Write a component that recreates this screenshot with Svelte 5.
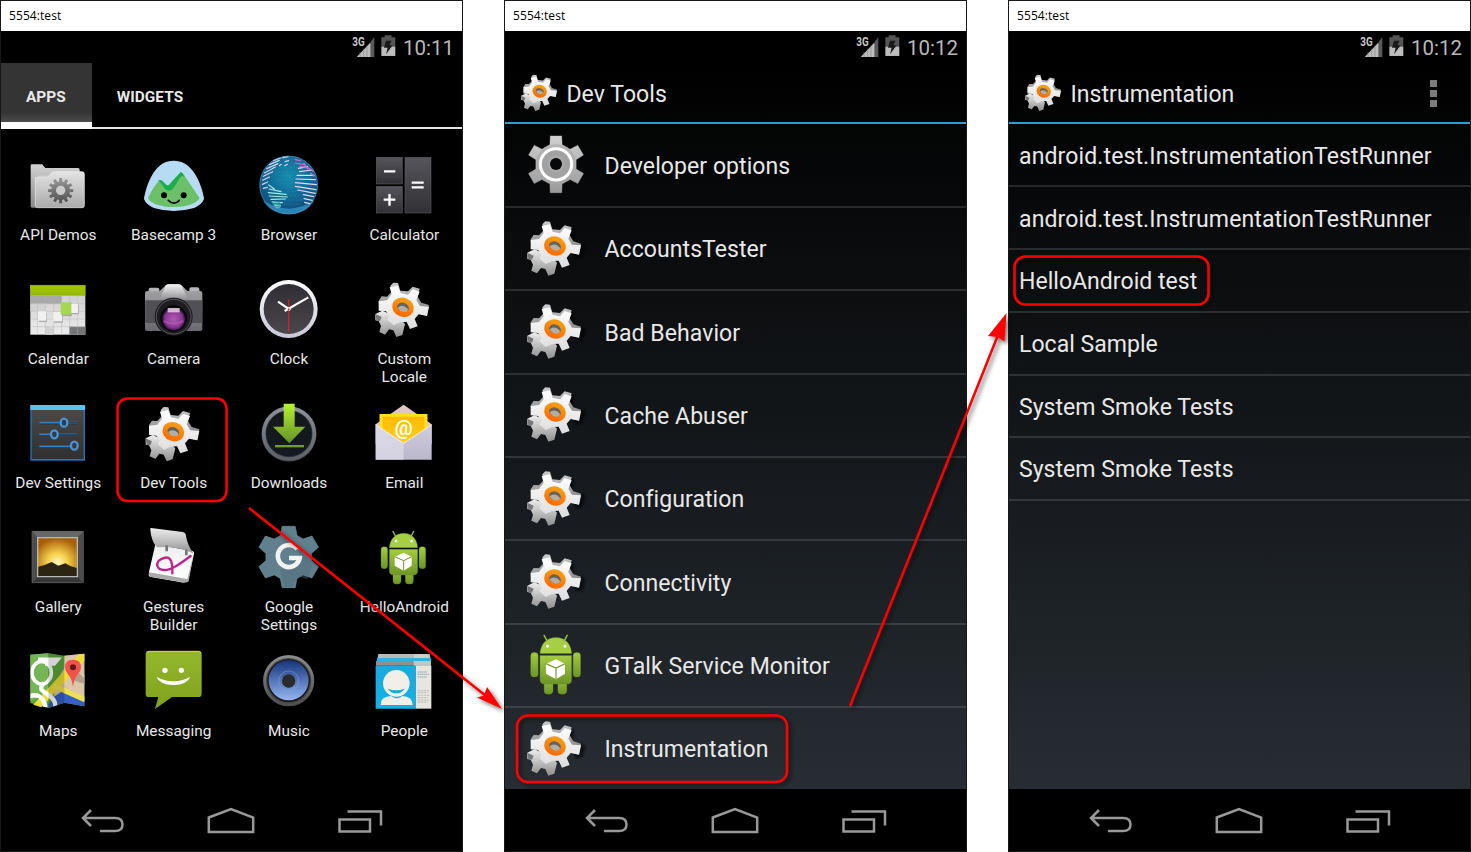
<script>
  const apps = [
    ['API Demos', 'folder', '80 24'],
    ['Basecamp 3', 'basecamp', '426 24'],
    ['Browser', 'browser', '75 24'],
    ['Calculator', 'calculator', '421 24'],
    ['Calendar', 'calendar', '80 21'],
    ['Camera', 'camera', '426 21'],
    ['Clock', 'clock', '75 21'],
    ['Custom Locale', 'gears', '421 21'],
    ['Dev Settings', 'sliders', '80 33'],
    ['Dev Tools', 'gears', '420 20'],
    ['Downloads', 'downloads', '75 33'],
    ['Email', 'email', '421 33'],
    ['Gallery', 'gallery', '80 30'],
    ['Gestures Builder', 'gestures', '426 30'],
    ['Google Settings', 'google', '75 30'],
    ['HelloAndroid', 'android', '421 30'],
    ['Maps', 'maps', '80 402'],
    ['Messaging', 'messaging', '426 402'],
    ['Music', 'music', '75 402'],
    ['People', 'people', '421 402'],
  ];

  const tools = [
    ['Developer options', 'options'],
    ['AccountsTester', 'gears'],
    ['Bad Behavior', 'gears'],
    ['Cache Abuser', 'gears'],
    ['Configuration', 'gears'],
    ['Connectivity', 'gears'],
    ['GTalk Service Monitor', 'android'],
    ['Instrumentation', 'gears'],
  ];
  const toolViews = { options: '60 308 192 192', gears: '421 22 192 192', android: '432 40 168 172' };

  const tests = [
    'android.test.InstrumentationTestRunner',
    'android.test.InstrumentationTestRunner',
    'HelloAndroid test',
    'Local Sample',
    'System Smoke Tests',
    'System Smoke Tests',
  ];

  // Toothed wheel outline; tip and base are half-angles in radians.
  function wheel(cx, cy, outer, inner, teeth, tip, base) {
    const pts = [];
    for (let i = 0; i < teeth; i++) {
      const a = (i * 2 * Math.PI) / teeth - Math.PI / 2;
      for (const [r, d] of [[inner, -base], [outer, -tip], [outer, tip], [inner, base]]) {
        pts.push(`${(cx + r * Math.cos(a + d)).toFixed(1)} ${(cy + r * Math.sin(a + d)).toFixed(1)}`);
      }
    }
    return `M${pts.join('L')}Z`;
  }
</script>

{#snippet icon(name, box)}
  <svg class="icon" viewBox={box} aria-hidden="true">
    {#if name === 'folder'}
      <path d="M94 62q0-4 4-4h28q4 0 6 4l6 7h98q5 0 5 5v20H110v94h-12q-4 0-4-4z" fill="url(#folderBack)" />
      <path d="M108 101q0-7 7-7h28q5 0 8-4l5-6q3-4 8-4h84q7 0 7 7v95q0 6-6 6H114q-6 0-6-6z" fill="url(#folderFront)" stroke="#eee" stroke-width="2" />
      <path d={wheel(184, 137, 38, 28, 12, 0.11, 0.17)} fill="url(#darkGear)" />
      <circle cx="184" cy="136" r="14" fill="#cbcbcb" />
    {:else if name === 'basecamp'}
      <path d="M521 47c-48 0-76 48-89 112 0 10 12 22 30 30q59 18 120 0c18-8 30-20 30-30-13-64-43-112-91-112z" fill="#b7dbf3" />
      <path d="M444 158c9-18 23-43 34-51 8-5 10 9 20 20 8 8 14 0 20-8l25-33c5-5 10 5 15 13l40 59c-3 13-29 28-77 28-46 0-73-14-77-28z" fill="#6cc069" />
      <path d="M473 108c12-8 16 2 24 10 7 7 13-1 18-8l25-27c6-4 9 4 13 12-8-5-12 2-17 9-7 9-16 35-31 33-16-2-18-27-32-29z" fill="#1bad49" />
      <circle cx="492" cy="151" r="9" /><circle cx="551" cy="151" r="9" />
      <path d="M505 166q17 17 33 0" fill="none" stroke="#000" stroke-width="5" stroke-linecap="round" />
    {:else if name === 'browser'}
      <circle cx="170" cy="120" r="88" fill="url(#globe)" />
      <path d="M92 165q78 52 156 0q-25 43-78 43t-78-43z" fill="#3b9fd9" opacity=".65" />
      <g fill="none" stroke="#4fa9cc" stroke-width="1.6" stroke-dasharray="3 5" opacity=".6">
        <path d="M145 68h50M133 80h62M138 92h50M138 104h48M145 116h45M155 128h38M165 140h34M165 152h40M160 165h52M155 178h50M138 42h65" />
      </g>
      <g fill="none" stroke="#e6d7f4" stroke-width="3.6" stroke-linecap="round">
        <path d="M124 47l22-8M112 59l30-13M104 71l34-15M97 84l33-18M94 94l28-14M92 106l20-10M91 118l16-7M94 130l12-3M152 38l16-3M159 50l11-3M158 62l8-4M142 62l6-4" stroke="#d9d0ee" />
        <path d="M199 70l28-5M203 80l36-5M195 91l51 0M192 102l58 2M190 113l63 6M190 124l62 10M197 135l53 10M214 149l31 6M216 161l25 5M218 172l15 4" />
        <path d="M190 44l17 4M190 54l26 5M204 64l22 5M216 55l11 17M229 69l15 10M236 85l10 8" stroke="#d36ad4" />
        <path d="M110 120l18 13M111 132l36 8M109 143l53 5M112 153l54 3M117 163l43-1M123 173l28 0M129 182l17 1" stroke="#a8e8e5" />
        <path d="M120 170l22 2M126 179l19 1M132 188l10 0" stroke="#38cbb5" />
      </g>
      <circle cx="170" cy="120" r="86.5" fill="none" stroke="#42a7d8" stroke-width="2" opacity=".7" />
    {:else if name === 'calculator'}
      <g fill="url(#key)" stroke="#656569" stroke-width="1.5">
        <rect x="434" y="37" width="78" height="80" /><rect x="434" y="124" width="78" height="80" /><rect x="520" y="37" width="78" height="167" />
      </g>
      <path d="M457 79h34M456 164h35M473.500 147v35M540 113h36M540 127h36" stroke="#fff" stroke-width="7" />
    {:else if name === 'calendar'}
      <rect x="93" y="45" width="165" height="149" fill="url(#calendarPage)" />
      <path d="M93 78h94v23H93z" fill="#a9a9aa" /><path d="M93 101h45v22H93zM138 170h25v24h-25z" fill="#d2d2d3" />
      <path d="M210 170h48v24h-48z" fill="#747678" />
      <path d="M114 78v116M138 78v116M163 78v116M187 78v116M211 78v116M235 78v116M93 101h165M93 124h165M93 147h165M93 170h165" stroke="#b2b2b4" stroke-width="1.2" />
      <rect x="93" y="45" width="165" height="32" fill="url(#lime)" />
      <path d="M93 46h165" stroke="#789500" stroke-width="2" />
      <g fill="#777"><path d="M118 128h25v28h-25zM164 130h26v28h-26zM216 105h22v28h-22zM187 100h31v39h-31z" opacity=".5" /></g>
      <path d="M116 124h25v28h-25zM162 126h26v28h-26zM214 101h22v28h-22z" fill="#f1f1f1" />
      <path d="M184 97h32v37h-32z" fill="#a5d850" />
    {:else if name === 'camera'}
      <path d="M446 58q0-5 6-5h20q6 0 6 5v8h-32zM568 57q0-5 6-5h18q6 0 6 5v8h-30z" fill="#b6b6b8" />
      <path d="M435 70q0-7 8-7h36l16-15q5-6 14-6h25q9 0 13 6l15 15h38q7 0 7 7v108q0 5-6 5H441q-6 0-6-5z" fill="url(#cameraBody)" />
      <path d="M436 91h171v68H436z" fill="#505055" />
      <path d="M497 46q3-3 12-3h25q8 0 12 5l18 42q-44-18-86 0z" fill="url(#prism)" />
      <circle cx="521" cy="140" r="57" fill="#1d1c20" /><circle cx="521" cy="140" r="52" fill="none" stroke="#5a575b" stroke-width="3" />
      <circle cx="521" cy="145" r="40" fill="#08070a" />
      <circle cx="521" cy="147" r="34" fill="url(#lens)" />
      <path d="M503 114h36v13h-36z" fill="#eadce9" opacity=".8" />
      <path d="M491 153q30 16 60 0" fill="none" stroke="#b768b8" stroke-width="6" opacity=".5" />
    {:else if name === 'clock'}
      <circle cx="170" cy="117" r="87" fill="url(#clockRim)" />
      <circle cx="170" cy="117" r="75" fill="url(#clockFace)" />
      <path d="M170 88v98" stroke="#c32626" stroke-width="4" />
      <path d="M138 95l37 25M158 123l71-41" stroke="#fff" stroke-width="6.500" />
      <circle cx="170" cy="118" r="3" fill="#d33" />
    {:else if name === 'gears'}
      <path d="M560 112l38-8 8 12-9 30-20 5zM545 62l25 0 0 28-18 6z" fill="#000" opacity=".55" filter="url(#soft)" />
      <path d="M431 132l21-10 48 20 20 20-8 33-18 6-9-20-13-3-12 16-17-8 5-18-7-15-10-2z" fill="url(#gearBack)" />
      <path d="M431 132l3 19 11 2 5-12z" fill="#777" />
      <path d="M480 65L476 47 485 38 499 39 506 62 529 64 543 50 564 56 558 80 569 98 592 105 586 138 560 131 480 125 443 115 441 92 450 79 466 80z" fill="url(#gearSide)" />
      <path d="M480 73L474 52 498 47 507 69 529 74 543 58 564 65 554 90 565 108 592 110 586 138 561 133 549 147 558 169 535 177 525 156 505 157 486 166 467 149 474 137 463 124 441 122 441 94 466 91z" fill="url(#gearFront)" />
      <ellipse cx="514" cy="112" rx="24" ry="20" transform="rotate(20 514 112)" fill="#65635f" />
      <path d="M498 113q10-9 22-3l9 7-2 9q-20 6-29-13z" fill="#c4c0b8" opacity=".8" />
      <ellipse cx="514" cy="112" rx="25.500" ry="21" transform="rotate(20 514 112)" fill="none" stroke="url(#orange)" stroke-width="15" />
    {:else if name === 'sliders'}
      <rect x="93" y="47" width="164" height="165" fill="#2b73b4" />
      <rect x="97" y="50" width="156" height="157" fill="url(#settingsFace)" />
      <path d="M93 45h164v15H93z" fill="#55c3f5" />
      <path d="M120 100h114M120 135h114M120 170h114" stroke="#252629" stroke-width="5" />
      <path d="M120 98h66M206 98h28M120 133h38M178 133h56M120 169h94" stroke="#3482c6" stroke-width="5" />
      <path d="M206 98h28M178 133h56" stroke="#20486f" stroke-width="4" />
      <g fill="#333a42" stroke="#4795d6" stroke-width="7"><ellipse cx="194" cy="98" rx="10" ry="12" /><ellipse cx="165" cy="133" rx="10" ry="12" /><ellipse cx="225" cy="167" rx="10" ry="12" /></g>
    {:else if name === 'downloads'}
      <circle cx="171" cy="132" r="83" fill="#303439" /><circle cx="171" cy="131" r="76" fill="none" stroke="url(#downloadRim)" stroke-width="11" />
      <circle cx="171" cy="131" r="68" fill="#14191d" />
      <path d="M155 41h33v69h32l-48 50-49-50h32z" fill="url(#downloadArrow)" />
      <path d="M129 165h87v7h-87z" fill="#6f9f2e" />
    {:else if name === 'email'}
      <path d="M432 103l84-59 84 59v60H432z" fill="#dfc7c0" />
      <path d="M444 72h143v95H444z" fill="url(#mailPaper)" />
      <path d="M444 72h143v8H444zM444 72h9v55h-9zM578 72h9v55h-9z" fill="#fff12e" opacity=".7" />
      <text x="516" y="134" text-anchor="middle" class="at">@</text>
      <path d="M432 104l84 57 84-57v105H432z" fill="url(#mailFront)" />
      <path d="M432 104l84 57v48h-84z" fill="#e2e1ec" opacity=".65" />
      <path d="M432 104l84 56 84-56" fill="none" stroke="#f4edf2" stroke-width="3" />
    {:else if name === 'gallery'}
      <path d="M98 49h154v154H98z" fill="#4c4c4c" /><path d="M98 49h154l-17 18H115z" fill="#686868" /><path d="M98 203h154l-17-17H115z" fill="#373737" />
      <path d="M113 66h123v121H113z" fill="#b9b8b4" /><path d="M117 70h115v113H117z" fill="url(#sunset)" />
      <path d="M117 155q20-4 40-14l20 11 21-7 15 8 19 6v24H117z" fill="#2c2511" />
      <path d="M98 49h154v154H98z" fill="none" stroke="#666" stroke-width="2" />
    {:else if name === 'gestures'}
      <path d="M466 88l112 20q6 3 4 8l-16 74-10 11q-6 3-16 0l-91-16q-5-4-2-14z" fill="url(#padPage)" />
      <path d="M447 172l115 20 18-70-14 77q-5 5-18 3l-97-17q-5-3-4-13z" fill="#a9a9ab" />
      <path d="M453 39l95 12q7 1 9 7 5 33 23 57-54-24-109-18-17-17-20-53-1-6 2-5z" fill="url(#padCover)" />
      <path d="M500 91v18M559 104v17" stroke="#77777a" stroke-width="8" />
      <path d="M572 123c-27 20-57 43-80 42-23-1-27-22-9-32 25-14 36-1 34 42" fill="none" stroke="#bd2489" stroke-width="7" stroke-linecap="round" />
    {:else if name === 'google'}
      <path d={wheel(170, 126, 94, 69, 6, 0.21, 0.37)} fill="#61808e" stroke="#6d8d9a" stroke-width="2" />
      <path d="M203 105l39 49-16 39-20-8-20 15-3 16h-25l-15-53 49-2z" fill="#4d6b78" opacity=".45" />
      <path d="M196 102A33 33 0 1 0 203 129H171" fill="none" stroke="#f3f3f3" stroke-width="14" />
    {:else if name === 'android'}
      <g fill="url(#robot)" stroke="#668d21" stroke-width="1">
        <rect x="448" y="95" width="20" height="66" rx="9" /><rect x="562" y="95" width="20" height="66" rx="9" />
        <rect x="484" y="155" width="24" height="52" rx="10" /><rect x="521" y="155" width="24" height="52" rx="10" />
        <path d="M473 103h85v65q0 12-13 12h-59q-13 0-13-12z" />
        <path d="M473 98c2-28 20-43 43-43s40 15 42 43z" fill="#a7cf45" />
      </g>
      <path d="M492 64l-8-15M538 64l8-15" stroke="#95bd3a" stroke-width="4" stroke-linecap="round" />
      <circle cx="493" cy="78" r="4" fill="#fff" /><circle cx="540" cy="78" r="4" fill="#fff" />
      <path d="M516 113l24 12v27l-24 15-27-15v-27z" fill="#fff" /><path d="M489 125l27 12 24-12M516 137v30" fill="none" stroke="#749827" stroke-width="3" />
    {:else if name === 'maps'}
      <path d="M93 419l54-4 48 7 60-6v158l-60-11-48 16-54-15z" fill="#5ca63c" />
      <path d="M195 422l60-6v91l-60-11z" fill="#d9c4ad" />
      <path d="M93 419l54-4v121l-54 22z" fill="#74b655" />
      <path d="M147 569l48-70 60 43v32l-60-11-48 16z" fill="#365fc4" />
      <path d="M170 503l25-44 60 20v80l-60-35-31 21z" fill="#dcc8a8" />
      <path d="M102 569L240 417h15v20L126 577z" fill="#f0dd39" /><path d="M166 506l89 39v17l-96-43z" fill="#eee14c" />
      <g clip-path="url(#mapClip)"><ellipse cx="127" cy="473" rx="29" ry="34" fill="none" stroke="#fff" stroke-width="11" /><path d="M116 434h58l-10 12h-27M134 503c-13 17-13 20 12 36 18 12 27 26 20 47M81 548c28-15 52-7 57 29" fill="none" stroke="#fff" stroke-width="13" /></g>
      <path d="M147 415l48 7v141l-48 16z" fill="#000" opacity=".17" />
      <path d="M225 495l13-21 17 16v16l-25-7z" fill="#8f7d73" opacity=".55" />
      <path d="M221 516q-3-24-15-38-9-10-9-22 0-22 24-22t24 22q0 12-9 22-12 14-15 38z" fill="#f1534b" /><circle cx="221" cy="457" r="9" fill="#641718" />
    {:else if name === 'messaging'}
      <path d="M445 408h151q9 0 9 10v118q0 10-10 10h-79l-51 36 10-36h-29q-9 0-9-10V418q0-10 8-10z" fill="url(#bubble)" />
      <path d="M441 412q2-3 7-3h147q5 0 8 5" fill="none" stroke="#e0d83d" stroke-width="3" />
      <circle cx="495" cy="466" r="8" fill="#fff" /><circle cx="544" cy="466" r="8" fill="#fff" />
      <path d="M469 485q51 27 102 0-9 24-51 25-41-1-51-25z" fill="#fff" />
    {:else if name === 'music'}
      <circle cx="170" cy="497" r="77" fill="#434343" /><circle cx="170" cy="497" r="72" fill="none" stroke="url(#musicRim)" stroke-width="8" />
      <circle cx="170" cy="497" r="64" fill="#19191b" /><circle cx="170" cy="496" r="60" fill="url(#speaker)" />
      <circle cx="170" cy="498" r="30" fill="none" stroke="#89a5df" stroke-width="3" opacity=".45" /><circle cx="170" cy="498" r="20" fill="#292b2d" />
    {:else if name === 'people'}
      <path d="M440 417h154l4 20H436z" fill="#b9b9b7" /><path d="M546 418h48l4 34h-46z" fill="#cecfcb" /><path d="M437 429h160v9H436z" fill="#36b0dc" /><path d="M433 438h165v14H433z" fill="#8f8f90" /><path d="M546 438h52v14h-52z" fill="#c4c4c1" />
      <path d="M432 452h120v129H432z" fill="url(#contact)" /><path d="M552 452h47v129h-47z" fill="#e6e5df" />
      <circle cx="494" cy="505" r="40" fill="#f2efe8" /><path d="M468 521q26 9 51 0-9 14-25 14t-26-14z" fill="#20a6d7" />
      <path d="M447 570q-1-26 31-27 8 7 17 7t17-7q31 2 31 27z" fill="#f2efe8" />
      <path d="M558 471h28M558 478h34M558 486h27" stroke="#8aa9b1" stroke-width="3" stroke-dasharray="5 1" />
      <path d="M558 527h35M558 533h30M558 541h37M558 548h30M558 555h33M558 561h30" stroke="#aaa" stroke-width="2" stroke-dasharray="7 2" />
    {:else if name === 'options'}
      <path d={wheel(156, 405, 87, 62, 6, 0.2, 0.3)} fill="url(#silver)" stroke="#bbb" stroke-width="1" />
      <circle cx="156" cy="404" r="60" fill="#a9a9a9" opacity=".6" /><circle cx="156" cy="405" r="47" fill="#a2a2a2" stroke="#fff" stroke-width="9" /><circle cx="156" cy="404" r="25" fill="#aaa" /><circle cx="156" cy="404" r="18" fill="#07080a" />
    {/if}
  </svg>
{/snippet}

{#snippet statusBar(time)}
  <div class="status">
    <svg class="signal" viewBox="1056 102 72 68" aria-hidden="true">
      <text x="1057" y="136" class="network" textLength="37" lengthAdjust="spacingAndGlyphs">3G</text>
      <path d="M1070 168L1112 124V168z" fill="#bdbdbd" /><path d="M1113 121l10-12v59h-10z" fill="#595959" />
      <path d="M1080 152v16M1091 143v25M1101 132v36" stroke="#777" stroke-width="1.5" />
    </svg>
    <svg class="battery" viewBox="1142 105 45 64" aria-hidden="true">
      <path d="M1143 112h10v-6h21v6h11v28h-42z" fill="#555" /><path d="M1143 140h42v28h-42z" fill="#bdbdbd" />
      <path d="M1157 122h17l-7 14h10l-20 27 5-20h-11z" fill="#181818" />
    </svg>
    <span>{time}</span>
  </div>
{/snippet}

{#snippet navBar()}
  <div class="nav">
    <svg viewBox="0 0 48 30" aria-hidden="true"><path d="M12 4L4 12l8 8M4.500 12H36q7.500 0 7.500 6.500T36 25H21" /></svg>
    <svg viewBox="0 0 48 30" aria-hidden="true"><path d="M1.800 11.500L24 3.200l22.200 8.300V26H1.800z" /></svg>
    <svg viewBox="0 0 48 30" aria-hidden="true"><path d="M3.500 13.500h30.500V25.500H3.500zM11.500 5.500H45V19.500" /></svg>
  </div>
{/snippet}

<svg class="defs" aria-hidden="true">
  <defs>
    {#each [
      ['folderBack', '#d2d2d3', '#888'], ['folderFront', '#e3e3e3', '#aaa'], ['darkGear', '#999', '#4f4f4f'],
      ['key', '#55555b', '#303035'], ['calendarPage', '#c9c9ca', '#ececec'], ['lime', '#a5c800', '#91b600'],
      ['cameraBody', '#a9a8ab', '#69686d'], ['prism', '#f4f3f5', '#8d8c91'], ['clockRim', '#fff', '#c6c6d5'], ['clockFace', '#302e34', '#49464c'],
      ['gearBack', '#eee', '#8e8e8e'], ['gearSide', '#ccc', '#777'], ['gearFront', '#fff', '#ddd'], ['orange', '#f69a13', '#ff6f00'],
      ['settingsFace', '#4b4b4b', '#303031'], ['downloadRim', '#8b929a', '#596066'], ['downloadArrow', '#b4f431', '#658e27'],
      ['mailPaper', '#fdb800', '#ffd21d'], ['mailFront', '#cfcddd', '#b9b7ca'], ['padPage', '#eee', '#fff'], ['padCover', '#eee', '#929293'],
      ['robot', '#a4cc40', '#6c9526'], ['bubble', '#93b82c', '#80a11d'], ['musicRim', '#8c8c8c', '#505050'], ['speaker', '#15347b', '#95b6f2'],
      ['contact', '#1aa9df', '#10b3e7'], ['silver', '#d1d1d1', '#999'],
    ] as [id, from, to]}
      <linearGradient {id} x1="0" y1="0" x2="0" y2="1"><stop stop-color={from} /><stop offset="1" stop-color={to} /></linearGradient>
    {/each}
    <radialGradient id="globe" cx=".5" cy=".35" r=".7"><stop stop-color="#168ead" /><stop offset=".6" stop-color="#126491" /><stop offset="1" stop-color="#104069" /></radialGradient>
    <radialGradient id="lens"><stop stop-color="#b05bb5" /><stop offset=".75" stop-color="#883891" /><stop offset="1" stop-color="#42134a" /></radialGradient>
    <radialGradient id="sunset" cx=".5" cy=".65" r=".65"><stop stop-color="#fff9bd" /><stop offset=".4" stop-color="#f4d04c" /><stop offset="1" stop-color="#a95f08" /></radialGradient>
    <clipPath id="mapClip"><path d="M93 419l54-4 48 7v141l-48 16-54-15z" /></clipPath>
    <filter id="soft"><feGaussianBlur stdDeviation="3" /></filter>
    <filter id="mark" x="-20%" y="-20%" width="140%" height="140%"><feDropShadow dx="2.500" dy="2.500" stdDeviation="2" flood-color="#000" flood-opacity=".55" /></filter>
  </defs>
</svg>

<main>
  <section class="phone launcher">
    <div class="title">5554:test</div>
    {@render statusBar('10:11')}
    <div class="tabs"><div class="tab active">APPS</div><div class="tab">WIDGETS</div></div>
    <div class="grid">
      {#each apps as [label, name, origin]}
        <div class="app">{@render icon(name, `${origin} 192 192`)}<span>{label}</span></div>
      {/each}
    </div>
    {@render navBar()}
  </section>

  <section class="phone holo">
    <div class="title">5554:test</div>
    {@render statusBar('10:12')}
    <div class="action">{@render icon('gears', '421 21 192 192')}<span>Dev Tools</span></div>
    <div class="list tools">
      {#each tools as [label, name]}
        <div class="row">{@render icon(name, toolViews[name])}<span>{label}</span></div>
      {/each}
    </div>
    {@render navBar()}
  </section>

  <section class="phone holo">
    <div class="title">5554:test</div>
    {@render statusBar('10:12')}
    <div class="action">{@render icon('gears', '421 21 192 192')}<span>Instrumentation</span><div class="more"><i></i><i></i><i></i></div></div>
    <div class="list tests">
      {#each tests as label}<div class="row" class:long={label.length > 30}><span>{label}</span></div>{/each}
    </div>
    {@render navBar()}
  </section>

  <svg class="marks" viewBox="0 0 1471 852" aria-hidden="true">
    <g filter="url(#mark)">
      <rect x="117.500" y="398.500" width="109" height="102.500" rx="10" />
      <rect x="517" y="715.500" width="270" height="66.500" rx="11" />
      <rect x="1014.500" y="256.500" width="194" height="48" rx="11" />
      <path d="M249 508L486 696M850 706L998 335" />
      <path class="head" d="M502 709L487 687 484 695.500 477 697.500zM1006.500 313L1004.500 341.500 997.500 337 988 336z" />
    </g>
  </svg>
</main>

<style>
  :global(body) { background: #fff; overflow: hidden; }
  .defs { position: absolute; width: 0; height: 0; }
  main { position: relative; display: flex; gap: 41px; width: 1471px; height: 852px; font-family: Roboto, sans-serif; color: #e8e8e8; }
  .phone { box-sizing: border-box; flex: none; display: flex; flex-direction: column; width: 463px; height: 852px; border: 1px solid #171717; background: #000; }
  .holo { background: linear-gradient(#000 62px, #272d33 790px); }
  .title { flex: none; height: 30px; box-sizing: border-box; padding-left: 8px; background: #fff; color: #000; font: 12px/30px "Open Sans", sans-serif; letter-spacing: 0.08px; }
  .status { flex: none; height: 32px; box-sizing: border-box; padding: 1px 8px 0 0; display: flex; justify-content: flex-end; align-items: center; background: #000; color: #b9b9b9; font-size: 20.5px; }
  .signal { width: 24px; height: 22.7px; margin: -3px 4.500px 0 0; }
  .battery { width: 15px; height: 21.3px; margin: -3px 7px 0 0; }
  .network { font: 700 37px Roboto, sans-serif; fill: #c8c8c8; }
  .icon { display: block; flex: none; width: 64px; height: 64px; overflow: visible; }
  .at { font: 700 60px Roboto, sans-serif; fill: #fff; }

  .tabs { flex: none; height: 66px; display: flex; box-sizing: border-box; background: linear-gradient(#e4e4e4, #e4e4e4) bottom / 100% 2px no-repeat; font-size: 15.36px; font-weight: 700; }
  .tab { padding: 0 26px 0 25px; line-height: 69px; height: 66px; letter-spacing: 0.05px; }
  .active { background: linear-gradient(#343434 0 75%, #4d4d4d 59px, #fff 59px); }
  .grid { flex: 1; display: grid; grid-template-columns: repeat(4, 115.35px); grid-auto-rows: 124px; padding-top: 24.4px; margin-left: -0.400px; }
  .app { display: flex; flex-direction: column; align-items: center; font-size: 15.36px; line-height: 17.5px; text-align: center; letter-spacing: 0.03px; }
  .app span { width: 98px; margin-top: 10px; }

  .action { flex: none; height: 61px; box-sizing: border-box; display: flex; align-items: center; padding-left: 14px; border-bottom: 2px solid #2f9dc9; font-size: 23.04px; letter-spacing: 0.06px; }
  .action .icon { width: 42.7px; height: 42.7px; margin-right: 4.700px; }
  .action span { padding-top: 4px; }
  .more { display: flex; flex-direction: column; gap: 3px; margin: 2px 33px 0 auto; }
  .more i { width: 7px; height: 7px; background: #7c7c7c; }
  .list { flex: 1; min-height: 0; overflow: hidden; display: grid; align-content: start; font-size: 23.04px; letter-spacing: 0.06px; }
  .tools { grid-auto-rows: 83.3px; padding-top: 0.800px; }
  .tests { grid-auto-rows: 62.7px; padding-top: 0.800px; letter-spacing: 0.02px; }
  .row { display: flex; align-items: center; box-sizing: border-box; border-bottom: 2px solid rgba(255, 255, 255, 0.13); }
  .tools .row { padding-left: 18.500px; }
  .tools .icon { margin: -2px 17px 0 0; }
  .tests .row { padding: 0.500px 0 0 10px; }
  .tests .long { letter-spacing: 0.11px; }
  .row span { padding-top: 2.200px; }

  .nav { flex: none; height: 62px; box-sizing: border-box; padding: 2px 38px 0; display: grid; grid-template-columns: repeat(3, 1fr); align-items: center; justify-items: center; background: #000; }
  .nav svg { width: 48px; height: 30px; fill: none; stroke: #999; stroke-width: 2.5; }
  .marks { position: absolute; inset: 0; width: 1471px; height: 852px; fill: none; stroke: #f00; stroke-width: 2.5; pointer-events: none; }
  .head { fill: #f00; stroke: none; }
</style>
